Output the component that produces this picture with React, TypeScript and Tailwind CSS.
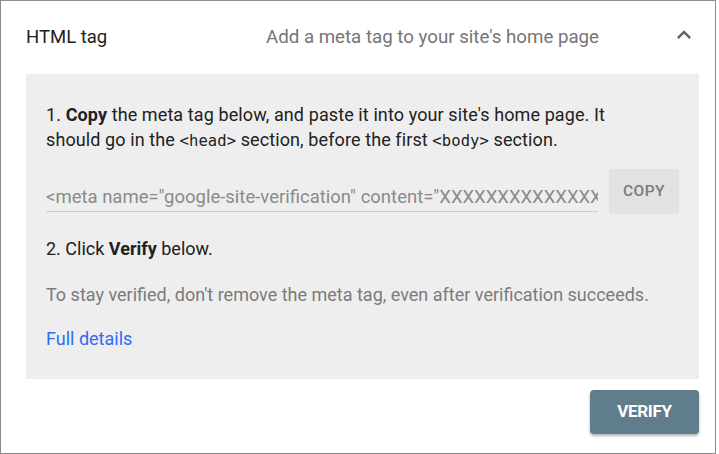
import React from "react";

export default function App() {
  const mono = { fontFamily: "'DejaVu Sans Mono', monospace" };
  return (
    <div className="w-[719px] h-[454px] bg-white" style={{ fontFamily: "Roboto, 'Liberation Sans', sans-serif" }}>
      <div className="w-[716px] h-[454px] border border-[#8c8c8c] bg-white flex flex-col">
        <div className="h-[73px] flex items-center pl-[25px] pr-[17px]">
          <div className="w-[240px] text-[18.5px] text-[#212121]">HTML tag</div>
          <div className="flex-1 text-[18.7px] text-[#757575]">Add a meta tag to your site's home page</div>
          <svg width="28" height="28" viewBox="0 0 24 24" className="-mt-[5px]">
            <path d="M7.41 15.41L12 10.83l4.59 4.58L18 14l-6-6-6 6z" fill="#616161" />
          </svg>
        </div>
        <div className="ml-[25px] w-[673px] h-[305px] bg-[#eeeeee] pl-[20px] pr-[20px] pt-[28px] flex flex-col text-[18px] text-[#212121]">
          <p className="leading-[25px] tracking-[0.1px]">
            1. <b className="font-bold">Copy</b> the meta tag below, and paste it into your site's home page. It
            <br />
            should go in the <span className="text-[15.5px]" style={mono}>&lt;head&gt;</span> section, before the first{" "}
            <span className="text-[15.5px]" style={mono}>&lt;body&gt;</span> section.
          </p>
          <div className="flex items-start mt-[15px]">
            <div className="w-[552px] h-[43px] border-b border-[#cfcfcf] overflow-hidden whitespace-nowrap text-[18.5px] text-[#8a8a8a] pt-[17px] leading-[22px]">
              &lt;meta name="google-site-verification" content="XXXXXXXXXXXXXXXXXXXXXXXXXXXXXXXXXX" /&gt;
            </div>
            <div className="ml-[11px] w-[70px] h-[45px] bg-[#e2e2e2] rounded-[3px] flex items-center justify-center text-[15.5px] font-medium text-[#7a7a7a] tracking-[0.5px]">
              COPY
            </div>
          </div>
          <p className="mt-[22px] leading-[25px]">
            2. Click <b className="font-bold">Verify</b> below.
          </p>
          <p className="mt-[21px] leading-[25px] text-[#7b7b7b]">
            To stay verified, don't remove the meta tag, even after verification succeeds.
          </p>
          <p className="mt-[19px] leading-[25px] text-[#2f6cf3]">Full details</p>
        </div>
        <div className="flex justify-end pr-[16px] pt-[11px]">
          <div className="w-[109px] h-[44px] bg-[#607d8b] rounded-[4px] shadow-[0_2px_3px_rgba(0,0,0,0.3)] flex items-center justify-center text-white font-bold text-[17px] tracking-[-0.3px]">
            VERIFY
          </div>
        </div>
      </div>
    </div>
  );
}
